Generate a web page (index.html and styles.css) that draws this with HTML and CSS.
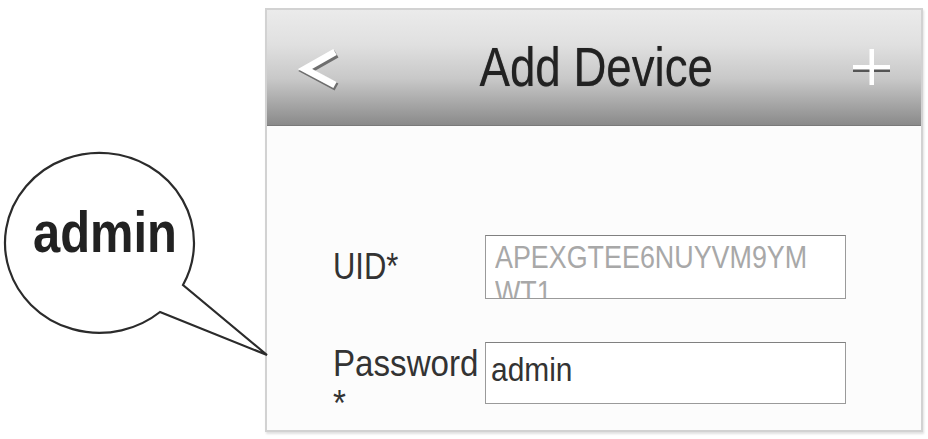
FILE: index.html
```html
<!DOCTYPE html>
<html>
<head>
<meta charset="utf-8">
<link rel="stylesheet" href="styles.css">
</head>
<body>
<div class="stage">
  <svg class="callout" width="280" height="240" viewBox="0 140 280 240">
    <path d="M 183 285 A 94.5 90 0 1 0 160 312 L 267 355 Z" fill="#fff" stroke="#2b2b2b" stroke-width="2.2" stroke-linejoin="miter"/>
    <text x="33" y="252" class="callout-text" textLength="144" lengthAdjust="spacingAndGlyphs">admin</text>
  </svg>
  <div class="phone">
    <div class="header">
      <svg class="icon-back" width="44" height="48" viewBox="0 0 44 48">
        <polyline points="37,7 7,24 37,40" fill="none" stroke="#6e6e6e" stroke-width="8" stroke-linejoin="miter" transform="translate(1.5,2)"/>
        <polyline points="37,7 7,24 37,40" fill="none" stroke="#ffffff" stroke-width="7" stroke-linejoin="miter"/>
      </svg>
      <div class="title"><span class="title-text">Add Device</span></div>
      <svg class="icon-add" width="44" height="48" viewBox="0 0 44 48">
        <rect x="2" y="21" width="37" height="4" fill="#555"/>
        <rect x="2" y="18" width="37" height="4.5" fill="#fff"/>
        <rect x="18.5" y="2" width="4.5" height="36" fill="#fff"/>
      </svg>
    </div>
    <div class="body">
      <div class="form">
        <div class="label label-uid"><span class="label-text">UID*</span></div>
        <div class="field field-uid"><span class="value value-uid">APEXGTEE6NUYVM9YM<br>WT1</span></div>
        <div class="label label-pass"><span class="label-text label-text-wide">Password *</span></div>
        <div class="field field-pass"><span class="value value-pass">admin</span></div>
      </div>
    </div>
  </div>
</div>
</body>
</html>
```
FILE: styles.css
```css
html, body {
  margin: 0;
  padding: 0;
  background: #ffffff;
}
body {
  font-family: "Liberation Sans", Arial, sans-serif;
}
.stage {
  position: relative;
  width: 928px;
  height: 439px;
  overflow: hidden;
  padding-top: 8px;
  box-sizing: border-box;
}
.callout {
  position: absolute;
  left: 0;
  top: 140px;
}
.callout-text {
  font-family: "Liberation Sans", Arial, sans-serif;
  font-weight: bold;
  font-size: 58px;
  fill: #222;
}
.phone {
  margin-left: 265px;
  width: 658px;
  height: 424px;
  box-sizing: border-box;
  border: 2px solid #d2d2d2;
  background: #fcfcfc;
  box-shadow: 1px 2px 2px rgba(0,0,0,0.12);
  display: flex;
  flex-direction: column;
}
.header {
  height: 116px;
  box-sizing: border-box;
  border-bottom: 1px solid #7a7a7a;
  background: linear-gradient(#ebebeb 0%, #e0e0e0 30%, #c8c8c8 60%, #a6a6a6 82%, #8a8a8a 100%);
  display: grid;
  grid-template-columns: 44px 1fr 44px;
  align-items: center;
  padding: 0 26px 0 31px;
}
.icon-back { display: block; margin-top: 2px; }
.icon-add { display: block; margin-top: 6px; }
.title {
  text-align: center;
  font-size: 56px;
  line-height: 1.12;
  color: #222;
}
.title-text {
  display: inline-block;
  transform: scaleX(0.815);
  transform-origin: center;
  text-shadow: 0 0 1px rgba(0,0,0,0.45);
}
.body {
  flex: 1;
  padding: 109px 0 0 66px;
}
.form {
  display: grid;
  grid-template-columns: 152px 361px;
  row-gap: 43px;
}
.label {
  font-size: 36px;
  line-height: 40px;
  color: #333;
  width: 152px;
}
.label-text {
  display: inline-block;
  transform: scaleX(0.86);
  transform-origin: left;
}
.label-text-wide {
  transform: scaleX(0.92);
}
.label-uid { align-self: center; }
.label-pass { align-self: start; margin-top: 2px; }
.field {
  border: 1px solid #9a9a9a;
  border-top-color: #808080;
  background: #fff;
  box-sizing: border-box;
  overflow: hidden;
}
.field-uid {
  height: 64px;
  padding: 4px 0 0 9px;
}
.field-pass {
  height: 62px;
  padding: 6px 0 0 5px;
}
.value {
  display: inline-block;
  white-space: nowrap;
  transform-origin: left top;
}
.value-uid {
  font-size: 32px;
  line-height: 35px;
  color: #a8a8a8;
  transform: scaleX(0.84);
}
.value-pass {
  font-size: 34px;
  line-height: 40px;
  color: #333;
  transform: scaleX(0.88);
}
```
